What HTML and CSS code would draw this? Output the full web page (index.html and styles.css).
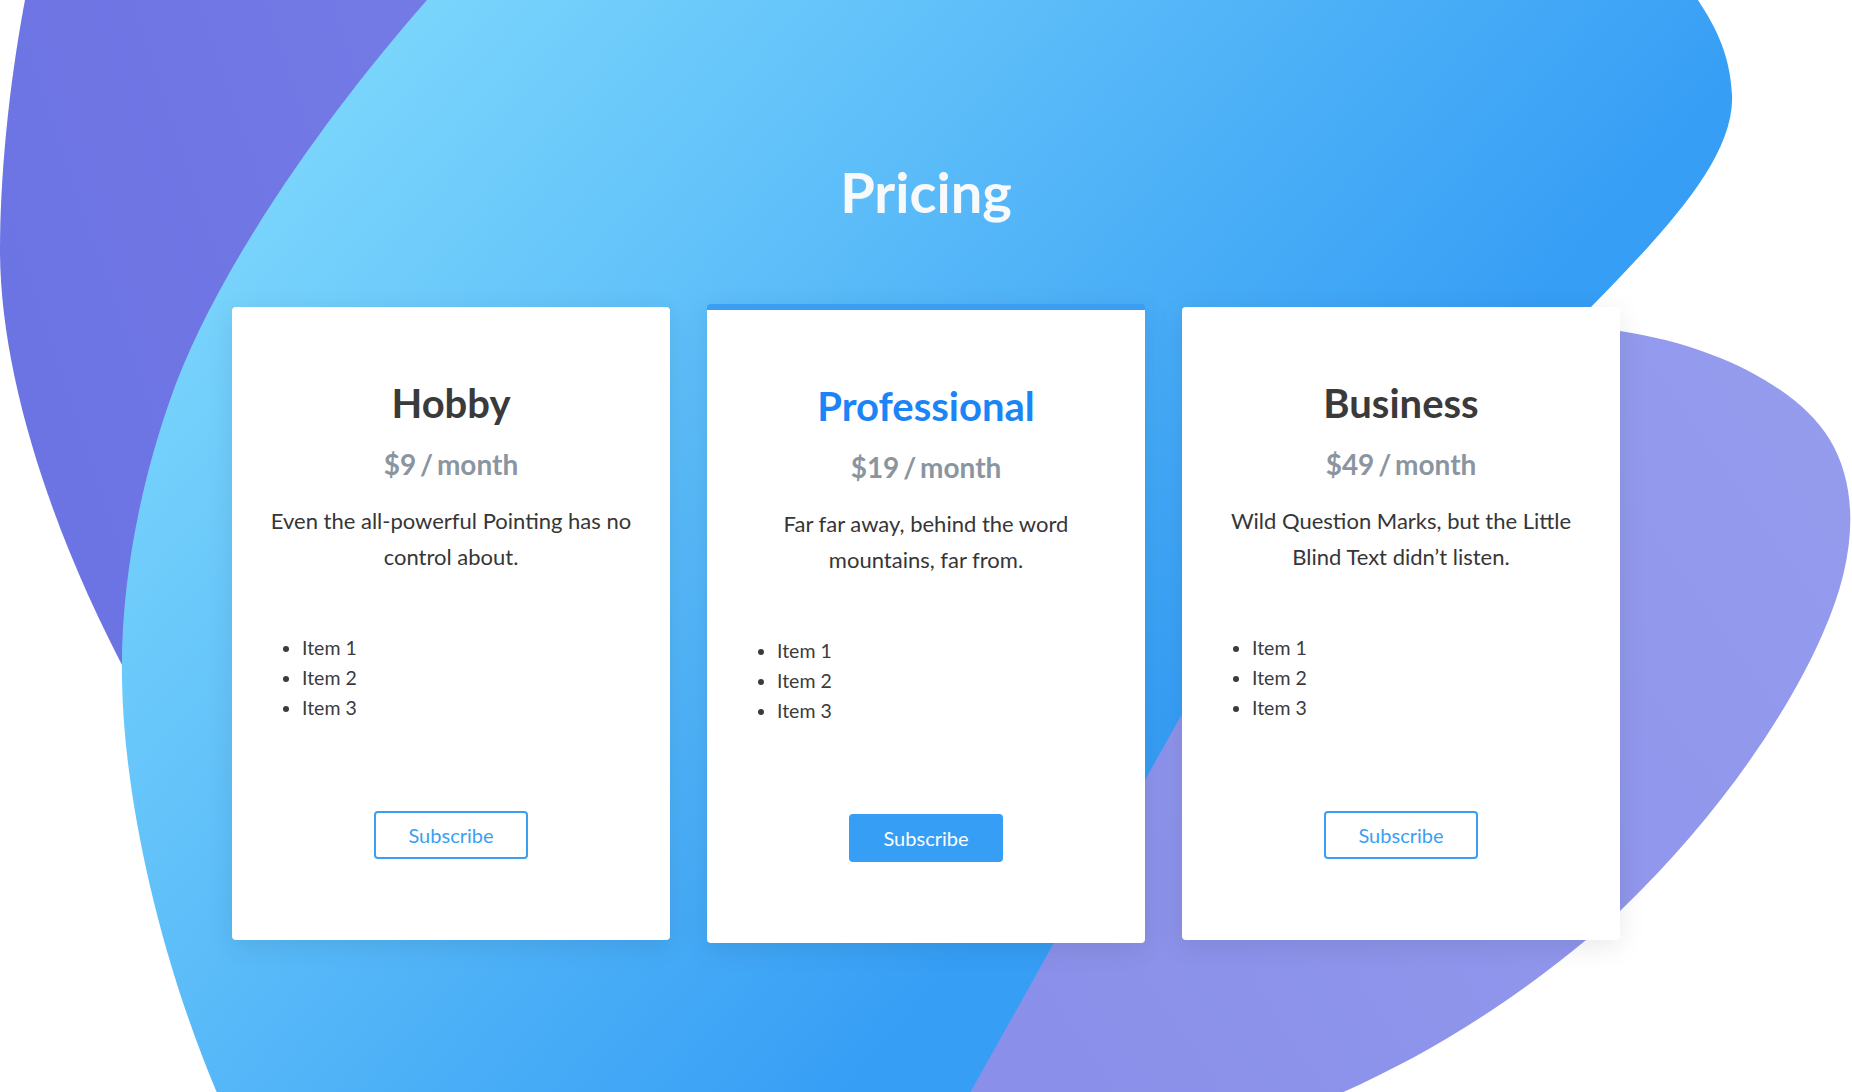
FILE: index.html
```html
<!DOCTYPE html>
<html lang="en">
<head>
<meta charset="utf-8">
<title>Pricing</title>
<link rel="stylesheet" href="styles.css">
</head>
<body>
<div class="page">
  <svg class="blobs" viewBox="0 0 1852 1092" preserveAspectRatio="none" aria-hidden="true">
    <defs>
      <linearGradient id="blueGrad" gradientUnits="userSpaceOnUse" x1="350" y1="50" x2="1150" y2="750">
        <stop offset="0" stop-color="#7bd6fc"/>
        <stop offset="1" stop-color="#369ef5"/>
      </linearGradient>
      <linearGradient id="lilacGrad" gradientUnits="userSpaceOnUse" x1="1000" y1="1000" x2="1850" y2="400">
        <stop offset="0" stop-color="#8a90e9"/>
        <stop offset="1" stop-color="#959cee"/>
      </linearGradient>
      <linearGradient id="purpleGrad" gradientUnits="userSpaceOnUse" x1="0" y1="300" x2="600" y2="100">
        <stop offset="0" stop-color="#6c73e3"/>
        <stop offset="1" stop-color="#767ce6"/>
      </linearGradient>
    </defs>
    <path fill="url(#purpleGrad)" d="M25,0 C8,90 0,180 0,250 C0,380 55,540 130,680 L600,680 L600,0 Z"/>
    <path fill="url(#lilacGrad)" d="M1300,330 C1420,316 1530,318 1620,331 C1720,346 1800,390 1830,440 C1860,490 1856,560 1823,633 C1790,710 1720,815 1620,911 C1520,1000 1420,1060 1325,1100 L900,1100 Z"/>
    <path fill="url(#blueGrad)" d="M427,0 C330,110 215,270 170,400 C142,480 120,580 122,680 C124,800 160,960 220,1100 L966,1100 L1182,714 C1300,560 1480,420 1592,306 C1660,236 1735,160 1732,95 C1730,50 1712,22 1698,0 L1690,-20 L440,-20 Z"/>
  </svg>

  <main class="pricing">
    <h1 class="pricing-title">Pricing</h1>
    <div class="plans">
      <section class="plan">
        <h3 class="plan-name">Hobby</h3>
        <p class="plan-price">$9 / month</p>
        <p class="plan-desc">Even the all-powerful Pointing has no control about.</p>
        <ul class="plan-items">
          <li>Item 1</li>
          <li>Item 2</li>
          <li>Item 3</li>
        </ul>
        <div class="plan-action"><button class="btn btn-outline" type="button">Subscribe</button></div>
      </section>
      <section class="plan plan-featured">
        <h3 class="plan-name">Professional</h3>
        <p class="plan-price">$19 / month</p>
        <p class="plan-desc">Far far away, behind the word mountains, far from.</p>
        <ul class="plan-items">
          <li>Item 1</li>
          <li>Item 2</li>
          <li>Item 3</li>
        </ul>
        <div class="plan-action"><button class="btn btn-solid" type="button">Subscribe</button></div>
      </section>
      <section class="plan">
        <h3 class="plan-name">Business</h3>
        <p class="plan-price">$49 / month</p>
        <p class="plan-desc">Wild Question Marks, but the Little Blind Text didn’t listen.</p>
        <ul class="plan-items">
          <li>Item 1</li>
          <li>Item 2</li>
          <li>Item 3</li>
        </ul>
        <div class="plan-action"><button class="btn btn-outline" type="button">Subscribe</button></div>
      </section>
    </div>
  </main>
</div>
</body>
</html>
```

FILE: styles.css
```css
* {
  box-sizing: border-box;
}

html, body {
  margin: 0;
  padding: 0;
  background: #ffffff;
}

body {
  font-family: Lato, "Open Sans", "Liberation Sans", sans-serif;
  color: #363636;
}

.page {
  position: relative;
  width: 100%;
  height: 1092px;
  overflow: hidden;
}

.blobs {
  position: absolute;
  left: 0;
  top: 0;
  width: 100%;
  height: 100%;
  z-index: 0;
}

.pricing {
  position: relative;
  z-index: 1;
  padding-top: 158px;
  display: flex;
  flex-direction: column;
  align-items: center;
}

.pricing-title {
  margin: 0;
  font-size: 56px;
  line-height: 1.2;
  font-weight: 700;
  color: #f7f9fb;
}

.plans {
  margin-top: 79px;
  display: flex;
  justify-content: center;
  align-items: center;
  gap: 37px;
}

.plan {
  width: 438px;
  background: #ffffff;
  border-radius: 4px;
  padding: 72px 30px 81px;
  text-align: center;
  display: flex;
  flex-direction: column;
  box-shadow: 0 6px 28px rgba(0, 0, 0, 0.09);
}

.plan-featured {
  border-top: 6px solid #3a9ef3;
}

.plan-name {
  margin: 0;
  font-size: 40px;
  line-height: 48px;
  font-weight: 700;
  color: #3a3a3a;
}

.plan-featured .plan-name {
  color: #1b84f6;
}

.plan-price {
  margin: 21px 0 0;
  font-size: 28px;
  line-height: 1.2;
  font-weight: 700;
  word-spacing: -3px;
  color: #8b95a0;
}

.plan-desc {
  margin: 21px 0 0;
  font-size: 22px;
  line-height: 36px;
  color: #363636;
}

.plan-items {
  margin: 58px 0 0;
  padding-left: 40px;
  text-align: left;
  font-size: 19.5px;
  line-height: 30px;
  color: #3b3b3b;
}

.plan-action {
  margin-top: 88px;
}

.btn {
  font-family: Lato, "Open Sans", "Liberation Sans", sans-serif;
  font-size: 20px;
  line-height: 30px;
  padding: 7px 32px;
  border: 2px solid #3a9ff2;
  border-radius: 4px;
  cursor: pointer;
}

.btn-outline {
  background: #ffffff;
  color: #3a9ff2;
}

.btn-solid {
  background: #369ef4;
  border-color: #369ef4;
  color: #ffffff;
}
```
